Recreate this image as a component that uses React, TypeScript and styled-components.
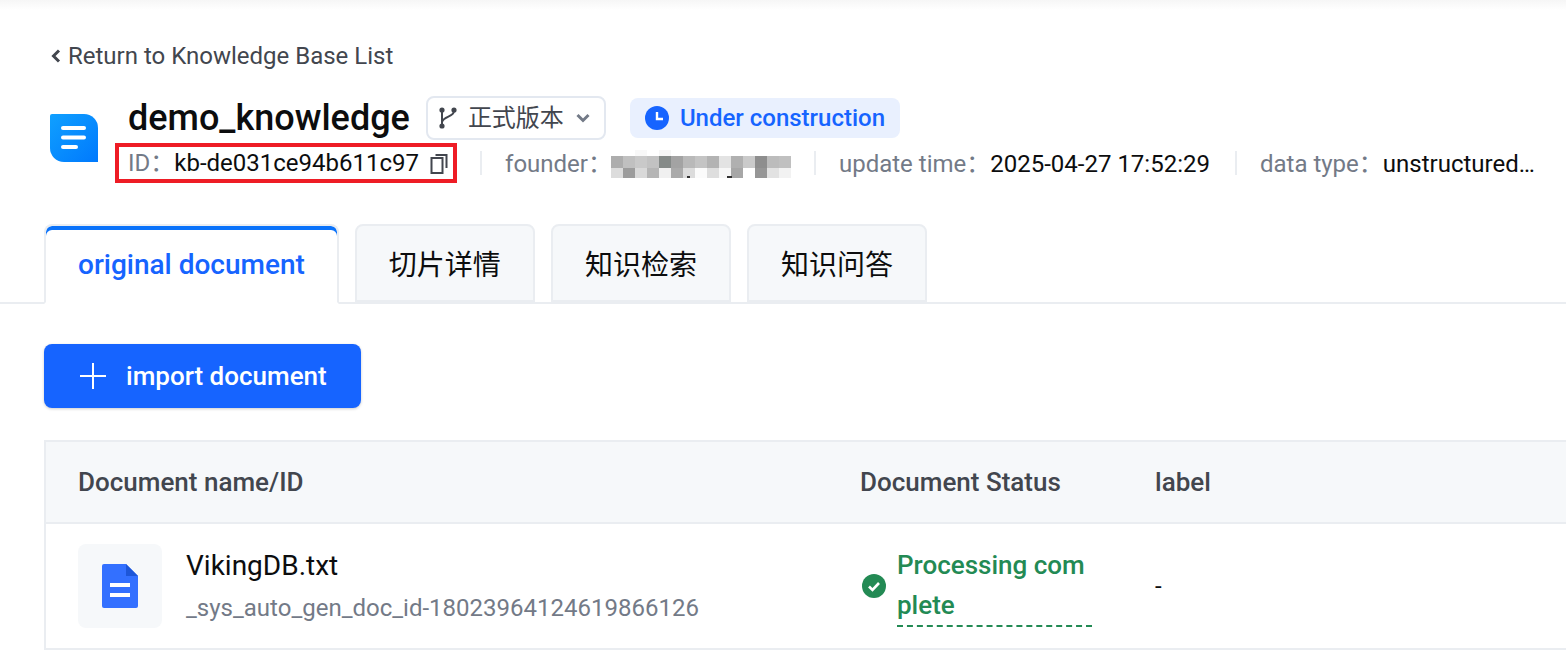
import React from 'react';
import styled, { createGlobalStyle } from 'styled-components';

const GlobalStyle = createGlobalStyle`
  html, body {
    margin: 0;
    padding: 0;
    background: #fff;
    overflow: hidden;
  }
  body {
    font-family: Roboto, "Noto Sans CJK SC", sans-serif;
  }
  * {
    box-sizing: border-box;
  }
`;

const Page = styled.div`
  width: 1566px;
  height: 666px;
  overflow: hidden;
  background: linear-gradient(#f6f6f6, #fff 10px);
`;

const Header = styled.div`
  padding: 42px 0 0 50px;
`;

const BackLink = styled.div`
  display: flex;
  align-items: center;
  gap: 6px;
  height: 28px;
  font-size: 24px;
  line-height: 28px;
  color: #42464e;
`;

const Summary = styled.div`
  display: flex;
  align-items: center;
  margin-top: 26px;
`;

const LogoTile = styled.div`
  width: 48px;
  height: 48px;
  flex: none;
  margin-bottom: 4px;
  border-radius: 2px 14px 0 14px;
  background: linear-gradient(135deg, #10a0ff, #0079fd);
  display: flex;
  align-items: center;
  justify-content: center;
`;

const SummaryBody = styled.div`
  margin-left: 30px;
`;

const TitleRow = styled.div`
  display: flex;
  align-items: center;
  height: 44px;
`;

const Title = styled.h1`
  margin: 0;
  font-size: 36px;
  line-height: 44px;
  font-weight: 500;
  color: #0c0d0e;
`;

const VersionSelect = styled.div`
  display: flex;
  align-items: center;
  width: 180px;
  height: 44px;
  margin-left: 16px;
  padding-left: 10px;
  border: 2px solid #e3e8f0;
  border-radius: 8px;
  font-size: 24px;
  color: #42464e;
`;

const VersionLabel = styled.span`
  margin-left: 10px;
  line-height: 28px;
`;

const StatusTag = styled.div`
  display: flex;
  align-items: center;
  gap: 11px;
  height: 40px;
  margin-left: 24px;
  padding: 0 15px;
  border-radius: 8px;
  background: #e9f0fe;
  color: #1664ff;
  font-size: 24px;
  font-weight: 500;
`;

const MetaRow = styled.div`
  display: flex;
  align-items: center;
  height: 40px;
  margin-top: 3px;
  margin-left: -13px;
  font-size: 24px;
  line-height: 28px;
  white-space: nowrap;
`;

const MetaItem = styled.div`
  display: flex;
  align-items: baseline;
  padding-top: 2px;
`;

const HighlightBox = styled(MetaItem)`
  height: 40px;
  padding: 2px 5px 0 9px;
  border: 4px solid #ee1c25;
`;

const MetaLabel = styled.span`
  color: #737a87;
`;

const MetaValue = styled.span`
  color: #0c0d0e;
`;

const MetaDivider = styled.span<{ $wide?: boolean }>`
  width: 2px;
  height: 24px;
  margin: 0 23px 0 ${(p) => (p.$wide ? 25 : 23)}px;
  background: #eaedf1;
`;

const Mosaic = styled.svg`
  display: block;
  align-self: center;
  margin-left: -1px;
`;

const CopyIcon = styled.svg`
  align-self: center;
  margin-left: 11px;
`;

const TabBar = styled.div`
  display: flex;
  gap: 16px;
  height: 80px;
  margin-top: 41px;
  padding-left: 44px;
  border-bottom: 2px solid #eaedf1;
`;

const Tab = styled.div<{ $active?: boolean }>`
  height: 80px;
  padding: 0 32px;
  display: flex;
  align-items: center;
  border: 2px solid #eaedf1;
  border-radius: 8px 8px 0 0;
  font-size: 28px;
  font-weight: ${(p) => (p.$active ? 500 : 400)};
  color: ${(p) => (p.$active ? '#1664ff' : '#0c0d0e')};
  background: ${(p) => (p.$active ? '#fff' : '#f6f8fa')};
  ${(p) => (p.$active ? `box-shadow: inset 0 4px 0 #0a72fa; border-bottom-color: #fff;` : `height: 78px;`)}
`;

const Content = styled.div`
  padding: 40px 0 0 44px;
`;

const ImportButton = styled.button`
  display: flex;
  align-items: center;
  gap: 20px;
  width: 317px;
  height: 64px;
  padding: 0 0 0 36px;
  border: 0;
  border-radius: 8px;
  background: #1664ff;
  box-shadow: 0 1px 3px rgba(0, 0, 0, 0.2);
  color: #fff;
  font-family: inherit;
  font-size: 26px;
  font-weight: 500;
`;

const Table = styled.div`
  width: 1540px;
  margin-top: 32px;
  border: 2px solid #eaedf1;
  border-right: 0;
`;

const Row = styled.div`
  display: grid;
  grid-template-columns: 782px 295px 1fr;
  padding-left: 32px;
`;

const HeadRow = styled(Row)`
  height: 82px;
  align-items: center;
  background: #f6f8fa;
  border-bottom: 2px solid #eaedf1;
  font-size: 26px;
  font-weight: 500;
  color: #42464e;
`;

const BodyRow = styled(Row)`
  height: 124px;
  align-items: center;
`;

const NameCell = styled.div`
  display: flex;
  align-items: center;
  gap: 24px;
`;

const FileTile = styled.div`
  width: 84px;
  height: 84px;
  border-radius: 8px;
  background: #f6f8fa;
  display: flex;
  align-items: center;
  justify-content: center;
`;

const FileInfo = styled.div`
  padding-top: 2px;
`;

const FileName = styled.div`
  font-size: 28px;
  line-height: 40px;
  color: #0c0d0e;
`;

const FileId = styled.div`
  margin-top: 2px;
  font-size: 24px;
  line-height: 40px;
  color: #737a87;
`;

const StatusCell = styled.div`
  display: flex;
  align-items: center;
  gap: 11px;
  margin-left: 2px;
`;

const StatusText = styled.div`
  width: 195px;
  font-size: 26px;
  line-height: 40px;
  font-weight: 500;
  color: #238a54;
  word-break: break-all;
  border-bottom: 2px dashed #238a54;
`;

const LabelCell = styled.div`
  font-size: 24px;
  color: #0c0d0e;
`;

const mosaicCells = [
  ['#adadad', '#c0c0c0', '#c9c9c9', '#c2c2c2', '#858a88', '#a3a3a3', '#b9b9b9', '#c4c4c4', '#b3b3b3', '#e3e3e3', '#b0b0b0', '#cacaca', '#8e8e8e', '#bcbcbc', '#c0c0c0'],
  ['#dcdcdc', '#9c9c9c', '#d9d9d9', '#b5b5b5', '#f0f0f0', '#aaaaaa', '#dcdcdc', '#fbfbfb', '#dedede', '#f7f7f7', '#a7a7a7', '#ffffff', '#969696', '#e2e2e2', '#f2f2f2'],
];

const App = () => (
  <Page>
    <GlobalStyle />
    <Header>
      <BackLink>
        <svg width="12" height="16" viewBox="0 0 12 16" fill="none">
          <path d="M9 2.5 3.5 8 9 13.5" stroke="#42464e" strokeWidth="3" />
        </svg>
        Return to Knowledge Base List
      </BackLink>
      <Summary>
        <LogoTile>
          <svg width="28" height="26" viewBox="0 0 28 26" fill="#fff">
            <rect x="1" y="1" width="25" height="4" rx="2" />
            <rect x="1" y="10.5" width="25" height="4" rx="2" />
            <rect x="1" y="20" width="17" height="4" rx="2" />
          </svg>
        </LogoTile>
        <SummaryBody>
          <TitleRow>
            <Title>demo_knowledge</Title>
            <VersionSelect>
              <svg width="20" height="24" viewBox="0 0 20 24" fill="none" stroke="#42464e" strokeWidth="2">
                <circle cx="4" cy="4" r="1.6" fill="#42464e" />
                <circle cx="4" cy="20" r="1.6" fill="#42464e" />
                <circle cx="16" cy="4" r="1.6" fill="#42464e" />
                <path d="M4 5v14M16 5c0 6-10 5-12 11" />
              </svg>
              <VersionLabel>正式版本</VersionLabel>
              <svg width="14" height="10" viewBox="0 0 14 10" fill="none" style={{ marginLeft: 12 }}>
                <path d="M1.5 2 7 7.5 12.5 2" stroke="#737a87" strokeWidth="3" />
              </svg>
            </VersionSelect>
            <StatusTag>
              <svg width="24" height="24" viewBox="0 0 24 24">
                <circle cx="12" cy="12" r="12" fill="#1664ff" />
                <path d="M12 6v7h6" fill="none" stroke="#fff" strokeWidth="2.4" />
              </svg>
              Under construction
            </StatusTag>
          </TitleRow>
          <MetaRow>
            <HighlightBox>
              <MetaLabel>ID：</MetaLabel>
              <MetaValue>kb-de031ce94b611c97</MetaValue>
              <CopyIcon width="18" height="20" viewBox="0 0 18 20" fill="none" stroke="#42464e" strokeWidth="2">
                <rect x="1.5" y="4" width="11" height="15" />
                <path d="M5.5 1h11v13" />
              </CopyIcon>
            </HighlightBox>
            <MetaDivider />
            <MetaItem>
              <MetaLabel>founder：</MetaLabel>
              <Mosaic width="180" height="28" viewBox="0 0 180 28">
                <rect x="24" width="12" height="6" fill="#f8f8f8" />
                <rect x="48" width="12" height="6" fill="#f6f6f6" />
                {mosaicCells.map((cells, r) =>
                  cells.map((fill, c) => (
                    <rect key={`${r}-${c}`} x={c * 12} y={6 + r * 12} width="12" height={r ? 10 : 12} fill={fill} />
                  ))
                )}
                <rect x="76" y="26" width="3" height="2" fill="#333" />
                <rect x="116" y="26" width="5" height="2" fill="#333" />
              </Mosaic>
            </MetaItem>
            <MetaDivider />
            <MetaItem>
              <MetaLabel>update time：</MetaLabel>
              <MetaValue>2025-04-27 17:52:29</MetaValue>
            </MetaItem>
            <MetaDivider $wide />
            <MetaItem>
              <MetaLabel>data type：</MetaLabel>
              <MetaValue>unstructured…</MetaValue>
            </MetaItem>
          </MetaRow>
        </SummaryBody>
      </Summary>
    </Header>
    <TabBar>
      <Tab $active>original document</Tab>
      <Tab>切片详情</Tab>
      <Tab>知识检索</Tab>
      <Tab>知识问答</Tab>
    </TabBar>
    <Content>
      <ImportButton>
        <svg width="26" height="26" viewBox="0 0 26 26" fill="none" stroke="#fff" strokeWidth="2">
          <path d="M13 0v26M0 13h26" />
        </svg>
        import document
      </ImportButton>
      <Table>
        <HeadRow>
          <div>Document name/ID</div>
          <div>Document Status</div>
          <div>label</div>
        </HeadRow>
        <BodyRow>
          <NameCell>
            <FileTile>
              <svg width="36" height="44" viewBox="0 0 36 44">
                <path d="M2 0h22l12 12v30a2 2 0 0 1-2 2H2a2 2 0 0 1-2-2V2a2 2 0 0 1 2-2z" fill="#3370ff" />
                <path d="M24 0l12 12H24z" fill="#1d56d8" />
                <rect x="8" y="19" width="20" height="4" fill="#fff" />
                <rect x="8" y="29" width="20" height="4" fill="#fff" />
              </svg>
            </FileTile>
            <FileInfo>
              <FileName>VikingDB.txt</FileName>
              <FileId>_sys_auto_gen_doc_id-18023964124619866126</FileId>
            </FileInfo>
          </NameCell>
          <StatusCell>
            <svg width="24" height="24" viewBox="0 0 24 24">
              <circle cx="12" cy="12" r="12" fill="#238a54" />
              <path d="M7 12.5l3.5 3.5L17 9" fill="none" stroke="#fff" strokeWidth="2.6" />
            </svg>
            <StatusText>Processing complete</StatusText>
          </StatusCell>
          <LabelCell>-</LabelCell>
        </BodyRow>
      </Table>
    </Content>
  </Page>
);

export default App;
